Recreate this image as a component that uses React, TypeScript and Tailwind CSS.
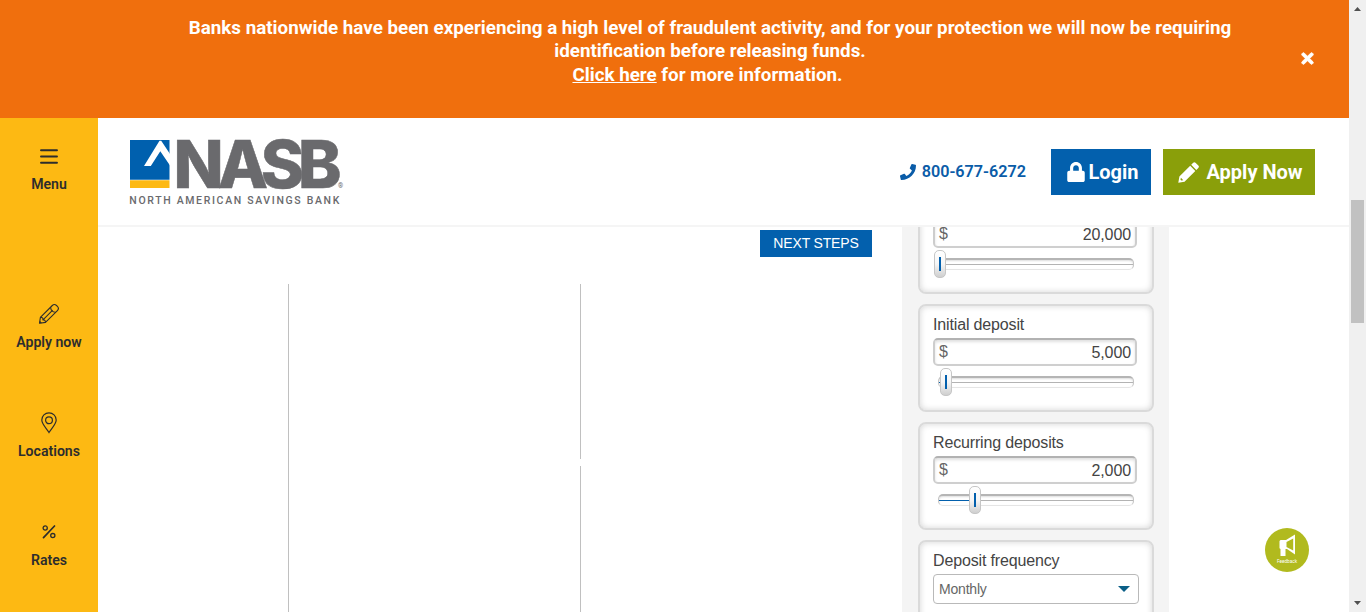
import React from "react";
import { FaPhone, FaLock, FaTimes } from "react-icons/fa";

const roboto = "font-['Roboto',sans-serif]";
const arial = "font-['Liberation_Sans',Arial,sans-serif]";

function Banner() {
  return (
    <div className={`flex h-[118px] shrink-0 bg-[#f06f0d] text-white ${roboto}`}>
      <p className="ml-[160px] w-[1100px] pt-[16.500px] text-center text-[18.8px] leading-[23.5px] font-bold">
        <span className="whitespace-nowrap">
          Banks nationwide have been experiencing a high level of fraudulent activity, and for your protection we will now be requiring
        </span>
        <br />
        identification before releasing funds.
        <br />
        <span className="mr-[5px]">
          <a className="underline">Click here</a> for more information.
        </span>
      </p>
      <button className="mb-px ml-[39px] self-center">
        <FaTimes size={17} stroke="white" strokeWidth={24} />
      </button>
    </div>
  );
}

function NavItem({ label, className, children }: { label: string; className: string; children: React.ReactNode }) {
  return (
    <a className={`flex h-[49px] flex-col items-center text-[14.1px] leading-[18px] font-semibold text-[#2d2d2d] ${className}`}>
      <span className="mb-[8px] flex h-[22px] items-center">{children}</span>
      {label}
    </a>
  );
}

function Sidebar() {
  return (
    <nav className={`flex w-[98px] shrink-0 flex-col bg-[#fdb913] ${roboto}`}>
      <NavItem label="Menu" className="mt-[27px]">
        <svg width="20" height="22" viewBox="0 0 20 22" stroke="#2d2d2d" strokeWidth="1.9" strokeLinecap="round">
          <path d="M2 5.300h16M2 11.500h16M2 17.700h16" />
        </svg>
      </NavItem>
      <NavItem label="Apply now" className="mt-[109px]">
        <svg width="22" height="22" viewBox="0 0 22 22" fill="none" stroke="#2d2d2d" strokeWidth="1.100" strokeLinejoin="round">
          <path d="M1.500 20.300l.9-6L14.300 2.500a3 3 0 0 1 4.200 0l.9.9a3 3 0 0 1 0 4.200L7.500 19.400z" />
          <path d="M2.400 14.300c2 0 2.800.9 2.500 2.600 1.700-.2 2.600.7 2.600 2.500M12.600 4.300c.2 2.900 2.200 4.900 5 5M14.700 7.200L5.500 16.300M1.700 18.500l1.700 1.600" />
        </svg>
      </NavItem>
      <NavItem label="Locations" className="mt-[60px]">
        <svg width="16" height="22" viewBox="0 0 16 22" fill="none" stroke="#2d2d2d" strokeWidth="1.2">
          <path d="M8 20.500C5.500 16.500.8 12 .8 8a7.200 7.200 0 0 1 14.400 0c0 4-4.700 8.500-7.200 12.500z" />
          <circle cx="8" cy="8.300" r="3.400" />
        </svg>
      </NavItem>
      <NavItem label="Rates" className="mt-[60px]">
        <svg width="14" height="14" viewBox="0 0 14 14" fill="none" stroke="#2d2d2d" strokeWidth="1.300">
          <circle cx="3.200" cy="3" r="2.100" />
          <circle cx="10.800" cy="10.600" r="2.100" />
          <path d="M1.500 12.600L12.500 1" strokeWidth="1.700" strokeLinecap="round" />
        </svg>
      </NavItem>
    </nav>
  );
}

function Logo() {
  return (
    <svg className="mt-[18px] ml-[31px] shrink-0 overflow-visible" width="216" height="72" viewBox="0 0 216 72" fill="#6a6a6d">
      <path fill="#0060ae" d="M1 4h39.500v39.700H1z" />
      <path fill="#fdb913" d="M1 44.300h39.500V52H1z" />
      <path fill="#fff" d="M15 30L30.500 4.700h1.700L41 18v11.500L31.300 15.300 21.800 30z" />
      <text x="44.500" y="51.500" fontSize="65.500" fontWeight="800" fontFamily="Inter, sans-serif" letterSpacing="-6" stroke="#6a6a6d" strokeWidth="0.5">
        NASB
      </text>
      <text x="0.300" y="68" fontSize="10.500" fontWeight="500" fontFamily="Roboto, sans-serif" textLength="210" lengthAdjust="spacing">
        NORTH AMERICAN SAVINGS BANK
      </text>
      <text x="209" y="51.500" fontSize="6.500" fontFamily="Roboto, sans-serif">®</text>
    </svg>
  );
}

function Pencil() {
  return (
    <svg width="21" height="21" viewBox="0 0 21 21" fill="white" fillRule="evenodd">
      <path d="M15.200.8a1.600 1.600 0 0 1 2.300 0l2.800 2.800a1.600 1.600 0 0 1 0 2.300l-2 2-5.100-5.100z" />
      <path d="M12.200 3.800l5.100 5.100L6.500 19.700l-6.200 1.100 1.100-6.200zM2.900 15.800l-.4 2 .8.8 2-.4z" />
    </svg>
  );
}

function Header() {
  return (
    <header className={`flex h-[109px] shrink-0 border-b-2 border-[#f5f5f5] bg-white ${roboto}`}>
      <Logo />
      <div className="mt-[31px] ml-auto flex h-[46px] items-center pr-[34px]">
        <a className="mr-[25px] flex items-center gap-[6px] text-[16.200px] font-semibold text-[#0a5ca8]">
          <FaPhone size={16} />
          800-677-6272
        </a>
        <a className="mr-3 flex h-[46px] w-[100px] items-center justify-center gap-[2px] bg-[#0360ad] pl-[3px] text-[20px] font-bold text-white">
          <FaLock size={20} />
          Login
        </a>
        <a className="flex h-[46px] w-[152px] items-center justify-center gap-[7px] bg-[#8a9f0a] pl-[3px] text-[20px] font-bold text-white">
          <Pencil />
          Apply Now
        </a>
      </div>
    </header>
  );
}

function Card({ label, children }: { label: string; children: React.ReactNode }) {
  return (
    <section className="h-[108px] shrink-0 rounded-[8px] border-2 border-[#dadada] bg-white px-[13px] pt-[10px] shadow-[inset_0_0_6px_#d4d4d4]">
      <div className="h-[22px] text-[16px] leading-[18px] tracking-[-0.150px] text-[#444]">{label}</div>
      {children}
    </section>
  );
}

function AmountCard({ label, value, offset }: { label: string; value: string; offset: number }) {
  return (
    <Card label={label}>
      <div className="flex h-[28px] w-[204px] items-center justify-between rounded-[5px] border-2 border-t-[#b2b2b2] border-x-[#cdcdcd] border-b-[#cfcfcf] bg-white px-[4px] text-[16px] leading-[24px] text-[#444] shadow-[inset_0_2px_3px_#e0e0e0]">
        <span className="text-[#666]">$</span>
        <span className="pt-[2px] tracking-[-0.100px]">{value}</span>
      </div>
      <div className="relative mt-[10px] ml-[5px] h-[12px] w-[196px] rounded-[5px] border border-t-2 border-[#c4c4c4] border-t-[#b5b5b5] border-b-[#e5e5e5] bg-white shadow-[inset_0_1px_2px_#ddd]">
        <div className="mt-[4px] h-px bg-[#b3b3b3]">
          <div className="h-px bg-[#0360ad]" style={{ width: Math.max(0, offset) }} />
        </div>
        <div
          className="absolute top-[-10px] flex h-[28px] w-[12px] items-center justify-center rounded-[5px] border border-[#c6c6c6] bg-linear-to-b from-white via-[#f6f6f6] to-[#cfcfcf]"
          style={{ left: offset }}
        >
          <span className="h-[14px] w-[2px] bg-[#0360ad]" />
        </div>
      </div>
    </Card>
  );
}

function Calculator() {
  return (
    <div className={`w-[267px] shrink-0 overflow-hidden bg-[#f4f4f4] pr-[15px] pl-4 ${arial}`}>
      <div className="-mt-[41px] flex flex-col gap-[10px]">
        <AmountCard label="Savings goal" value="20,000" offset={-5} />
        <AmountCard label="Initial deposit" value="5,000" offset={1} />
        <AmountCard label="Recurring deposits" value="2,000" offset={30} />
        <Card label="Deposit frequency">
          <div className="flex h-[30px] w-[206px] items-center justify-between rounded-[4px] border border-[#b9b9b9] bg-white pr-[8px] pl-[5px] text-[14px] tracking-[-0.200px] text-[#666]">
            Monthly
            <svg width="12" height="6" viewBox="0 0 12 6" fill="#0b5f87">
              <path d="M0 0h12L6 6z" />
            </svg>
          </div>
        </Card>
      </div>
    </div>
  );
}

function ChartArea() {
  return (
    <div className={`flex w-[804px] shrink-0 flex-col ${arial}`}>
      <button className="mt-[3px] mr-[30px] h-[27px] w-[112px] shrink-0 self-end bg-[#0360ad] text-[14px] tracking-[-0.150px] text-white">
        NEXT STEPS
      </button>
      <div className="mt-[27px] flex flex-1">
        <div className="ml-[190px] w-px bg-[#c0c0c0]" />
        <div className="ml-[291px] flex w-px flex-col gap-[7px]">
          <div className="h-[175px] bg-[#c0c0c0]" />
          <div className="flex-1 bg-[#c0c0c0]" />
        </div>
      </div>
    </div>
  );
}

function Feedback() {
  return (
    <button className="absolute top-[528px] left-[1265px] h-[44px] w-[44px] rounded-full bg-[#b1ba1e]">
      <svg width="44" height="44" viewBox="0 0 44 44" fill="white" fillRule="evenodd">
        <path d="M15.500 12H21L30 6.500v20L22 21h-1.500v7h-5v-7l-1-.8V13zM21.500 14v5l6.700 3.500V10.500z" />
        <text x="12" y="35" fontSize="6" fontFamily="Roboto, sans-serif" textLength="20" lengthAdjust="spacingAndGlyphs">
          Feedback
        </text>
      </svg>
    </button>
  );
}

function Scrollbar() {
  return (
    <div className="flex h-full w-[17px] shrink-0 flex-col items-center bg-[#f0f0f0]">
      <svg className="mt-[7px] shrink-0" width="7" height="4" viewBox="0 0 7 4" fill="#505050">
        <path d="M0 4L3.500 0 7 4z" />
      </svg>
      <div className="mt-[189px] h-[123px] w-[13px] shrink-0 bg-[#c1c1c1]" />
      <svg className="mt-auto mb-[7px] shrink-0" width="7" height="4" viewBox="0 0 7 4" fill="#505050">
        <path d="M0 0h7L3.500 4z" />
      </svg>
    </div>
  );
}

export default function App() {
  return (
    <div className="relative flex h-[612px] w-[1366px] overflow-hidden bg-white">
      <div className="flex w-[1349px] flex-col">
        <Banner />
        <div className="flex h-[494px]">
          <Sidebar />
          <main className="flex min-w-0 flex-1 flex-col">
            <Header />
            <div className="flex h-[385px]">
              <ChartArea />
              <Calculator />
            </div>
          </main>
        </div>
      </div>
      <Scrollbar />
      <Feedback />
    </div>
  );
}
